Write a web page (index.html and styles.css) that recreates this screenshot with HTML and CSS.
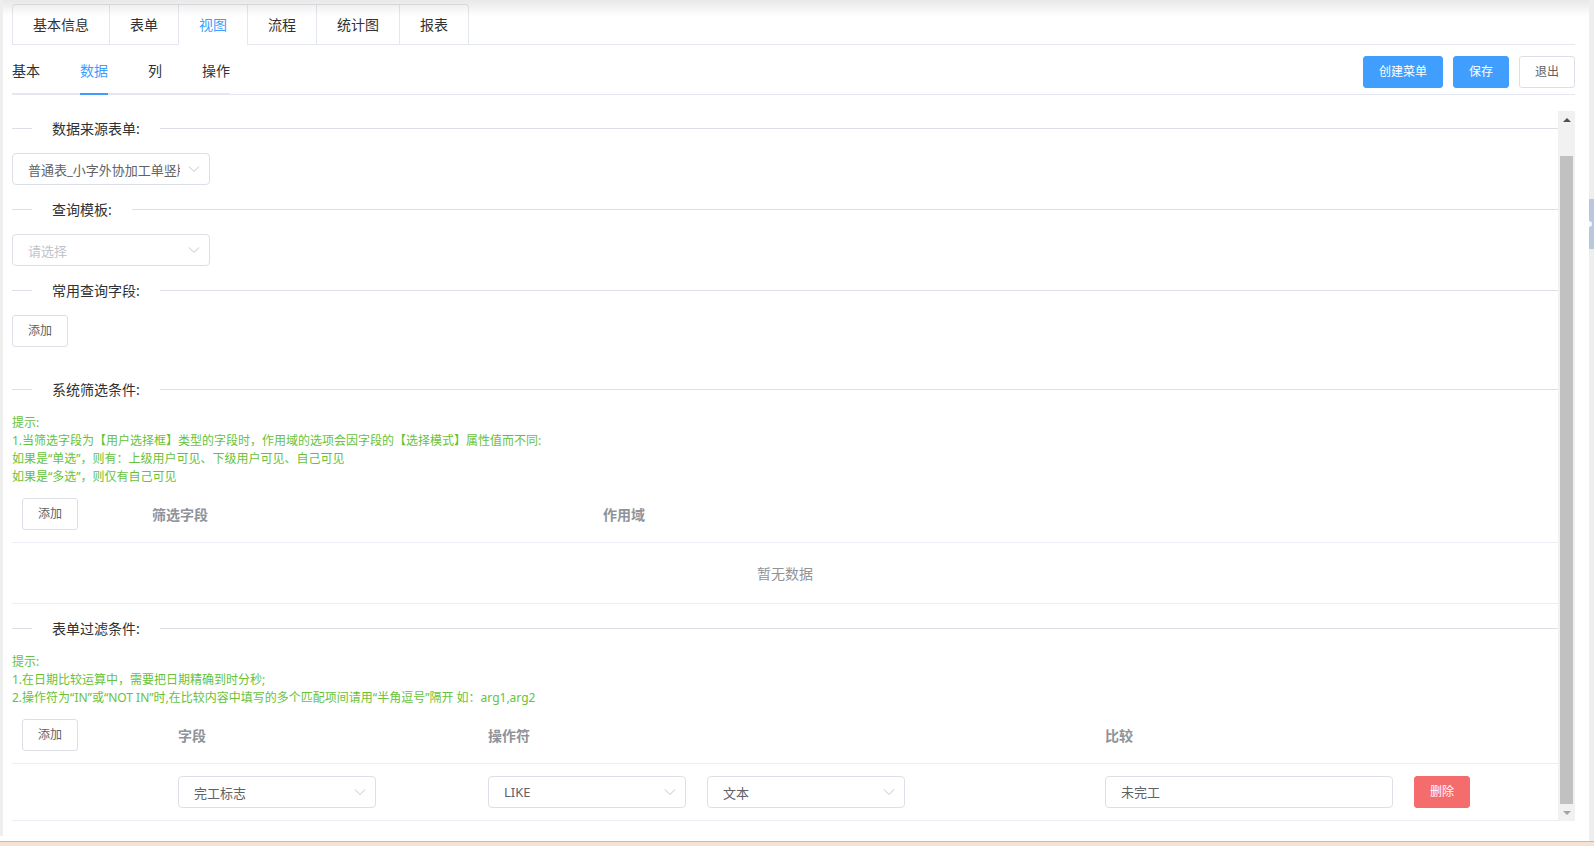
FILE: index.html
```html
<!DOCTYPE html>
<html lang="zh-CN">
<head>
<meta charset="utf-8">
<title>视图设置</title>
<link rel="stylesheet" href="styles.css">
</head>
<body>
<div class="screen">
  <div class="workspace">
    <div class="gutter-left"></div>
    <main class="panel">
      <div class="card-tabs">
        <div class="card-nav">
          <div class="card-item">基本信息</div>
          <div class="card-item">表单</div>
          <div class="card-item is-active">视图</div>
          <div class="card-item">流程</div>
          <div class="card-item">统计图</div>
          <div class="card-item">报表</div>
        </div>
      </div>

      <div class="subbar">
        <div class="sub-tabs">
          <div class="sub-item">基本</div>
          <div class="sub-item is-active">数据</div>
          <div class="sub-item">列</div>
          <div class="sub-item">操作</div>
        </div>
        <div class="actions">
          <button class="btn btn-primary">创建菜单</button>
          <button class="btn btn-primary">保存</button>
          <button class="btn">退出</button>
        </div>
      </div>

      <div class="scroll-area">
        <div class="scroller">
          <div class="scroll-body">
            <div class="divider"><span class="divider-lead"></span><span class="divider-text">数据来源表单:</span><span class="divider-tail"></span></div>
            <div class="select">
              <span class="select-text">普通表_小字外协加工单竖版</span>
              <svg class="select-arrow" viewBox="0 0 14 8" width="14" height="8"><path d="M2 1.5 7 6.5 12 1.5" fill="none" stroke="#c0c4cc" stroke-width="1"/></svg>
            </div>

            <div class="divider"><span class="divider-lead"></span><span class="divider-text">查询模板:</span><span class="divider-tail"></span></div>
            <div class="select">
              <span class="select-text is-placeholder">请选择</span>
              <svg class="select-arrow" viewBox="0 0 14 8" width="14" height="8"><path d="M2 1.5 7 6.5 12 1.5" fill="none" stroke="#c0c4cc" stroke-width="1"/></svg>
            </div>

            <div class="divider"><span class="divider-lead"></span><span class="divider-text">常用查询字段:</span><span class="divider-tail"></span></div>
            <div class="field-block">
              <button class="btn">添加</button>
            </div>

            <div class="divider"><span class="divider-lead"></span><span class="divider-text">系统筛选条件:</span><span class="divider-tail"></span></div>
            <div class="tips">
              <p>提示:</p>
              <p>1.当筛选字段为【用户选择框】类型的字段时，作用域的选项会因字段的【选择模式】属性值而不同:</p>
              <p>如果是“单选”，则有：上级用户可见、下级用户可见、自己可见</p>
              <p>如果是“多选”，则仅有自己可见</p>
            </div>
            <div class="table table-scope">
              <div class="cell head"><button class="btn">添加</button></div>
              <div class="cell head">筛选字段</div>
              <div class="cell head">作用域</div>
              <div class="empty">暂无数据</div>
            </div>

            <div class="divider"><span class="divider-lead"></span><span class="divider-text">表单过滤条件:</span><span class="divider-tail"></span></div>
            <div class="tips">
              <p>提示:</p>
              <p>1.在日期比较运算中，需要把日期精确到时分秒;</p>
              <p>2.操作符为“IN”或“NOT IN”时,在比较内容中填写的多个匹配项间请用“半角逗号”隔开 如：arg1,arg2</p>
            </div>
            <div class="table table-filter">
              <div class="cell head"><button class="btn">添加</button></div>
              <div class="cell head">字段</div>
              <div class="cell head">操作符</div>
              <div class="cell head">比较</div>

              <div class="cell"></div>
              <div class="cell">
                <div class="select">
                  <span class="select-text">完工标志</span>
                  <svg class="select-arrow" viewBox="0 0 14 8" width="14" height="8"><path d="M2 1.5 7 6.5 12 1.5" fill="none" stroke="#c0c4cc" stroke-width="1"/></svg>
                </div>
              </div>
              <div class="cell cell-pair">
                <div class="select">
                  <span class="select-text">LIKE</span>
                  <svg class="select-arrow" viewBox="0 0 14 8" width="14" height="8"><path d="M2 1.5 7 6.5 12 1.5" fill="none" stroke="#c0c4cc" stroke-width="1"/></svg>
                </div>
                <div class="select">
                  <span class="select-text">文本</span>
                  <svg class="select-arrow" viewBox="0 0 14 8" width="14" height="8"><path d="M2 1.5 7 6.5 12 1.5" fill="none" stroke="#c0c4cc" stroke-width="1"/></svg>
                </div>
              </div>
              <div class="cell cell-pair">
                <div class="input">未完工</div>
                <button class="btn btn-danger">删除</button>
              </div>
            </div>
          </div>
        </div>
        <div class="vscroll">
          <div class="vscroll-btn"><span class="arrow-up"></span></div>
          <div class="vscroll-track"><div class="vscroll-thumb"></div></div>
          <div class="vscroll-btn"><span class="arrow-down"></span></div>
        </div>
      </div>
    </main>
    <div class="gutter-right"><div class="gutter-tab"><span class="gutter-dot"></span></div></div>
  </div>
  <div class="taskbar"></div>
</div>
</body>
</html>
```

FILE: styles.css
```css
* {
  box-sizing: border-box;
}

html, body {
  margin: 0;
  padding: 0;
}

body {
  background: #fff;
  font-family: "Noto Sans", "Noto Sans CJK SC", sans-serif;
  color: #303133;
  overflow: hidden;
}

p {
  margin: 0;
}

button {
  font-family: inherit;
}

.screen {
  width: 1594px;
  height: 846px;
  display: flex;
  flex-direction: column;
}

.workspace {
  height: 841px;
  display: flex;
}

.gutter-left {
  width: 3px;
  height: 836px;
  background: #eeeeee;
}

.gutter-right {
  width: 5px;
  background: #eeeeee;
  padding-top: 199px;
}

.gutter-tab {
  height: 50px;
  background: #b8c9dd;
  display: flex;
  align-items: center;
}

.gutter-dot {
  width: 3px;
  height: 6px;
  border-radius: 0 3px 3px 0;
  background: rgba(255, 255, 255, 0.85);
}

.taskbar {
  height: 5px;
  border-top: 1px solid #cbbaab;
  background: #f5e2d2;
}

/* main white panel */
.panel {
  flex: 1;
  position: relative;
  padding: 4px 14px 0 9px;
  min-width: 0;
}

/* soft shadow cast on the top edge of the panel */
.panel::before {
  content: "";
  position: absolute;
  left: 0;
  right: 0;
  top: 0;
  height: 16px;
  background: linear-gradient(rgba(0, 0, 0, 0.09), rgba(0, 0, 0, 0.07) 4px, rgba(0, 0, 0, 0) 16px);
  pointer-events: none;
}

/* card style tabs */
.card-tabs {
  border-bottom: 1px solid #e4e7ed;
  display: flex;
}

.card-nav {
  display: flex;
  border: 1px solid #e4e7ed;
  border-bottom: none;
  border-radius: 4px 4px 0 0;
  margin-bottom: -1px;
}

.card-item {
  height: 40px;
  line-height: 39px;
  padding: 0 20px;
  font-size: 14px;
  color: #303133;
  border-left: 1px solid #e4e7ed;
  border-bottom: 1px solid transparent;
}

.card-item:first-child {
  border-left: none;
}

.card-item.is-active {
  color: #409eff;
  border-bottom-color: #fff;
}

/* secondary tabs + actions */
.subbar {
  display: flex;
  justify-content: space-between;
  align-items: center;
  padding-top: 6px;
  border-bottom: 1px solid #e4e7ed;
  margin-bottom: 16px;
}

.sub-tabs {
  display: flex;
  align-self: flex-start;
  border-bottom: 2px solid #e4e7ed;
  margin-bottom: -1px;
}

.sub-item {
  height: 44px;
  line-height: 40px;
  padding: 0 20px;
  font-size: 14px;
  color: #303133;
  margin-bottom: -2px;
  box-sizing: content-box;
}

.sub-item:first-child {
  padding-left: 0;
}

.sub-item:last-child {
  padding-right: 0;
}

/* active bar spans the label only */
.sub-item.is-active {
  color: #409eff;
  background-image: linear-gradient(#409eff, #409eff);
  background-repeat: no-repeat;
  background-origin: content-box;
  background-clip: content-box;
  background-size: 100% 2px;
  background-position: left bottom;
}

.actions {
  display: flex;
  gap: 10px;
  margin-bottom: 1px;
}

/* buttons */
.btn {
  height: 32px;
  padding: 0 15px;
  font-size: 12px;
  line-height: 30px;
  border-radius: 3px;
  border: 1px solid #dcdfe6;
  background: #fff;
  color: #606266;
  white-space: nowrap;
}

.btn-primary {
  background: #409eff;
  border-color: #409eff;
  color: #fff;
}

.btn-danger {
  background: #f56c6c;
  border-color: #f56c6c;
  color: #fff;
}

/* scrolling area, shown at its bottom end */
.scroll-area {
  height: 710px;
  display: flex;
}

.scroller {
  flex: 1;
  min-width: 0;
  overflow: hidden;
  display: flex;
  flex-direction: column-reverse;
}

.scroll-body {
  flex-shrink: 0;
  padding-top: 24px;
}

.vscroll {
  width: 17px;
  background: #f1f1f1;
  display: flex;
  flex-direction: column;
}

.vscroll-btn {
  height: 17px;
  display: flex;
  align-items: center;
  justify-content: center;
}

.arrow-up {
  width: 0;
  height: 0;
  border-left: 4px solid transparent;
  border-right: 4px solid transparent;
  border-bottom: 4px solid #505050;
}

.arrow-down {
  width: 0;
  height: 0;
  border-left: 4px solid transparent;
  border-right: 4px solid transparent;
  border-top: 4px solid #a3a3a3;
}

.vscroll-track {
  flex: 1;
  display: flex;
  flex-direction: column;
  justify-content: flex-end;
}

.vscroll-thumb {
  height: 648px;
  margin: 0 2px;
  background: #c1c1c1;
}

/* section dividers */
.divider {
  display: flex;
  align-items: center;
  height: 1px;
  margin: 24px 0;
}

.divider-lead {
  width: 20px;
  height: 1px;
  background: #dcdfe6;
}

.divider-tail {
  flex: 1;
  height: 1px;
  background: #dcdfe6;
}

.divider-text {
  padding: 0 20px;
  font-size: 14px;
  line-height: 20px;
  color: #303133;
  white-space: nowrap;
}

/* select box */
.select {
  width: 198px;
  height: 32px;
  border: 1px solid #dcdfe6;
  border-radius: 4px;
  background: #fff;
  display: flex;
  align-items: center;
  gap: 7px;
  padding: 0 8px 0 15px;
}

.select-text {
  flex: 1;
  min-width: 0;
  overflow: hidden;
  white-space: nowrap;
  font-size: 13px;
  color: #606266;
}

.select-text.is-placeholder {
  color: #c0c4cc;
}

.select-arrow {
  flex-shrink: 0;
}

.input {
  width: 288px;
  height: 32px;
  border: 1px solid #dcdfe6;
  border-radius: 4px;
  padding: 0 15px;
  font-size: 13px;
  line-height: 30px;
  color: #606266;
}

.field-block {
  padding-bottom: 18px;
}

/* green hint text */
.tips {
  font-size: 12px;
  line-height: 18px;
  color: #67c23a;
}

/* tables */
.table {
  display: grid;
  align-items: stretch;
}

.table-scope {
  grid-template-columns: 130px 451px 1fr;
}

.table-filter {
  grid-template-columns: 156px 310px 617px 1fr;
}

.cell {
  display: flex;
  align-items: center;
  min-height: 57px;
  padding: 12px 10px;
  border-bottom: 1px solid #ebeef5;
  font-size: 14px;
  color: #606266;
}

.cell.head {
  font-weight: bold;
  color: #909399;
}

.cell-pair {
  gap: 21px;
}

.empty {
  grid-column: 1 / -1;
  height: 61px;
  border-bottom: 1px solid #ebeef5;
  display: flex;
  align-items: center;
  justify-content: center;
  font-size: 14px;
  color: #909399;
}
```
